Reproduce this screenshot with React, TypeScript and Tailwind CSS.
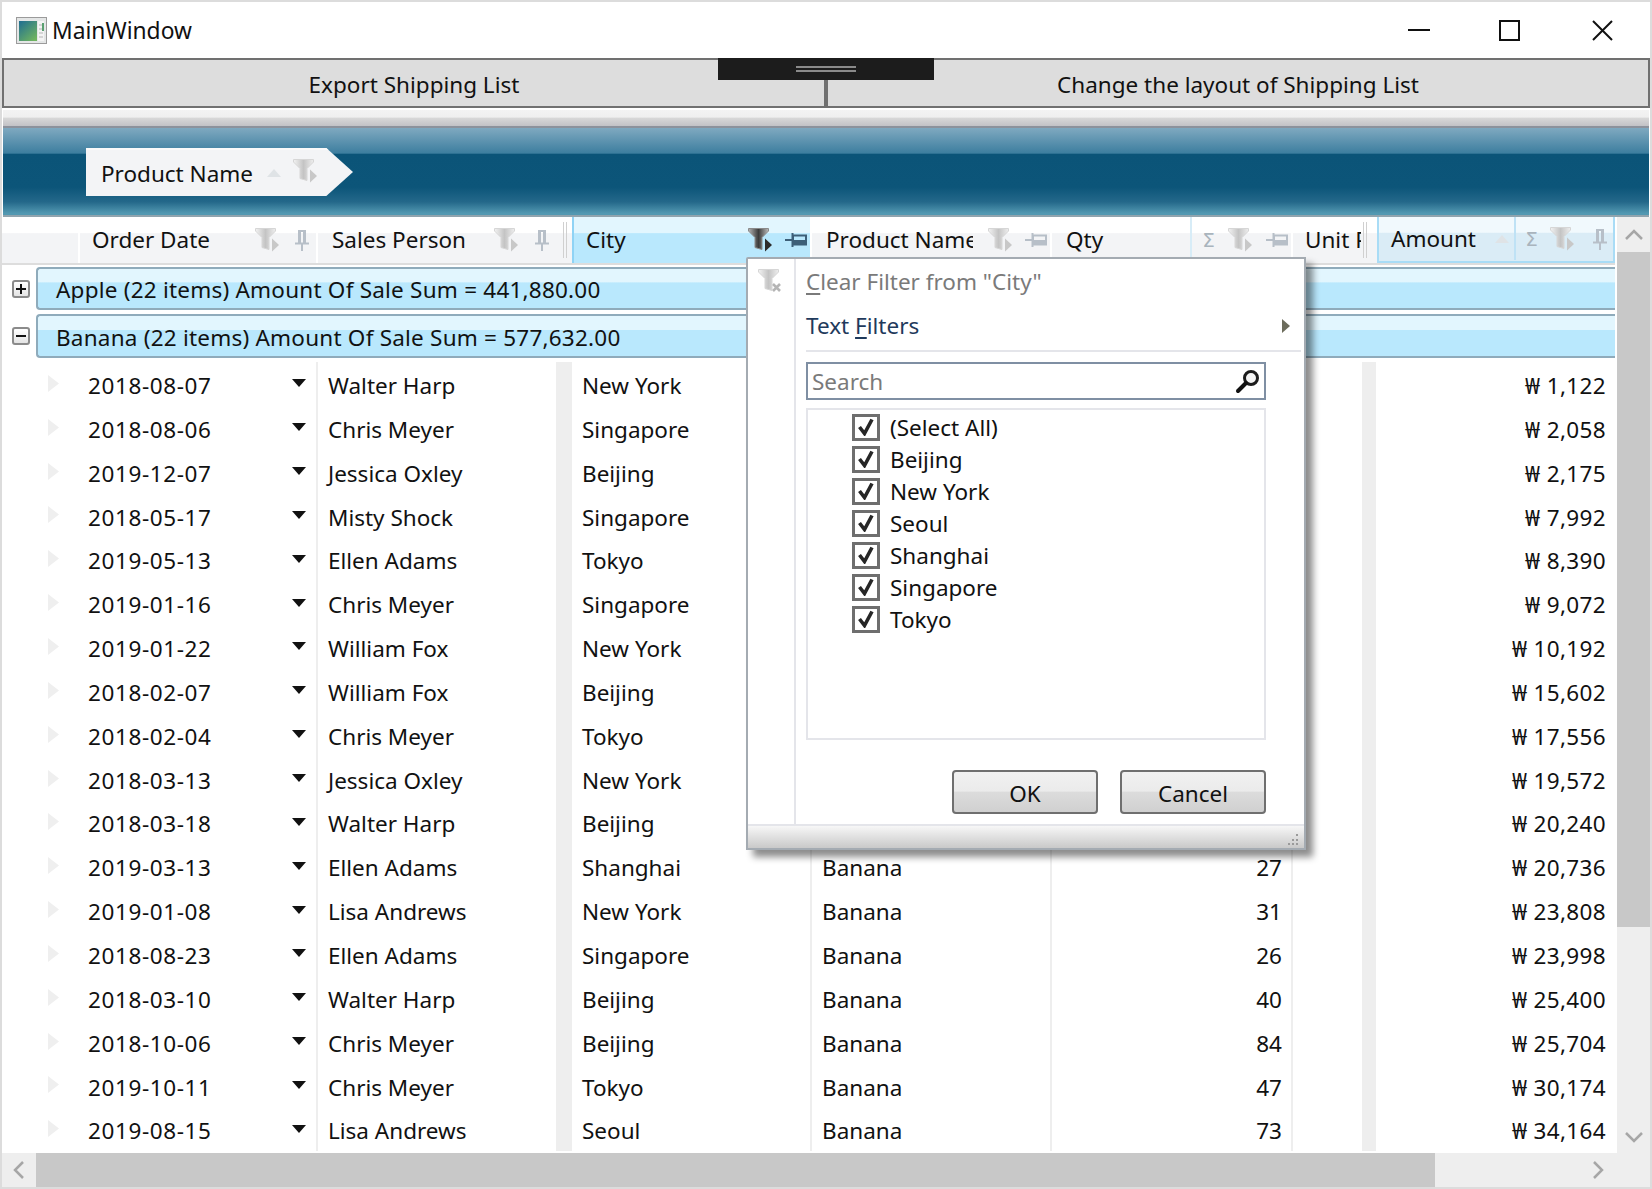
import React from "react";

const rows: [string, string, string, string, string][] = [
  ["2018-08-07", "Walter Harp", "New York", "", "1,122"],
  ["2018-08-06", "Chris Meyer", "Singapore", "", "2,058"],
  ["2019-12-07", "Jessica Oxley", "Beijing", "", "2,175"],
  ["2018-05-17", "Misty Shock", "Singapore", "", "7,992"],
  ["2019-05-13", "Ellen Adams", "Tokyo", "", "8,390"],
  ["2019-01-16", "Chris Meyer", "Singapore", "", "9,072"],
  ["2019-01-22", "William Fox", "New York", "", "10,192"],
  ["2018-02-07", "William Fox", "Beijing", "", "15,602"],
  ["2018-02-04", "Chris Meyer", "Tokyo", "", "17,556"],
  ["2018-03-13", "Jessica Oxley", "New York", "", "19,572"],
  ["2018-03-18", "Walter Harp", "Beijing", "", "20,240"],
  ["2019-03-13", "Ellen Adams", "Shanghai", "27", "20,736"],
  ["2019-01-08", "Lisa Andrews", "New York", "31", "23,808"],
  ["2018-08-23", "Ellen Adams", "Singapore", "26", "23,998"],
  ["2018-03-10", "Walter Harp", "Beijing", "40", "25,400"],
  ["2018-10-06", "Chris Meyer", "Beijing", "84", "25,704"],
  ["2019-10-11", "Chris Meyer", "Tokyo", "47", "30,174"],
  ["2019-08-15", "Lisa Andrews", "Seoul", "73", "34,164"],
];

const cities = ["(Select All)", "Beijing", "New York", "Seoul", "Shanghai", "Singapore", "Tokyo"];

function Funnel({ active = false, x = false }: { active?: boolean; x?: boolean }) {
  const id = active ? "fa" : x ? "fx" : "fn";
  return (
    <svg width="25" height="24" viewBox="0 0 25 24" className="shrink-0">
      <defs>
        <linearGradient id={id} x1="0" y1="0" x2="1" y2="0">
          <stop offset="0" stopColor={active ? "#b5b5b5" : "#f2f2f2"} />
          <stop offset="0.5" stopColor={active ? "#3c3c3c" : "#c4c4c4"} />
          <stop offset="1" stopColor={active ? "#bcbcbc" : "#eeeeee"} />
        </linearGradient>
      </defs>
      <path d="M0.500 0.500h20v2.500l-6.500 6.500v12l-7-2v-10L0.500 3z" fill={`url(#${id})`} stroke={active ? "#8a8a8a" : "#d6d6d6"} strokeWidth="1" />
      {x ? (
        <path d="M15 15l7 7M22 15l-7 7" stroke="#b5b5b5" strokeWidth="2.600" fill="none" />
      ) : (
        <path d="M17 10.500l7 6.500-7 6.500z" fill={active ? "#2b2b2b" : "#c8c8c8"} />
      )}
    </svg>
  );
}

function PinV({ color = "#b7bfc8" }: { color?: string }) {
  return (
    <svg width="14" height="22" viewBox="0 0 14 22" className="shrink-0">
      <path d="M0 14.500h14M7 15v7" stroke={color} strokeWidth="2" fill="none" />
      <path d="M3 1h8v13H8V3H6v11H3z" fill={color} />
      <path d="M8 2h3v12H8z" fill={color} />
    </svg>
  );
}

function PinH({ color = "#b7bfc8" }: { color?: string }) {
  return (
    <svg width="22" height="14" viewBox="0 0 22 14" className="shrink-0">
      <path d="M7.500 0v14M0 7h7" stroke={color} strokeWidth="2" fill="none" />
      <path d="M8 2.500h13v9H8z" fill="none" stroke={color} strokeWidth="2" />
      <path d="M8 7h13v5H8z" fill={color} />
    </svg>
  );
}

function Sigma() {
  return <span className="text-[20px] leading-none text-[#a9b4bd] shrink-0 font-['DejaVu_Sans',sans-serif]">Σ</span>;
}

function SortUp() {
  return (
    <svg width="14" height="8" viewBox="0 0 14 8" className="shrink-0">
      <path d="M7 0l7 8H0z" fill="#dfe3e6" />
    </svg>
  );
}

function Check() {
  return (
    <span className="w-[28px] h-[27px] border-[3px] border-[#6e6e6e] flex items-center justify-center shrink-0 bg-white">
      <svg width="18" height="18" viewBox="0 0 18 18">
        <path d="M2.500 9l5 6.500L15 1.500" stroke="#262626" strokeWidth="3.600" fill="none" />
      </svg>
    </span>
  );
}

function Chevron({ dir }: { dir: "up" | "down" | "left" | "right" }) {
  const d = { up: "M2 11l8-8 8 8", down: "M2 3l8 8 8-8", left: "M11 2l-8 8 8 8", right: "M3 2l8 8-8 8" }[dir];
  const vert = dir === "up" || dir === "down";
  return (
    <svg width={vert ? 20 : 14} height={vert ? 14 : 20} viewBox={vert ? "0 0 20 14" : "0 0 14 20"}>
      <path d={d} stroke="#a6a6a6" strokeWidth="2.500" fill="none" />
    </svg>
  );
}

function GroupRow({ sign, text, className, textClass }: { sign: string; text: string; className: string; textClass: string }) {
  return (
    <div className={`flex items-center ${className}`}>
      <div className="w-[34px] pl-[10px] shrink-0">
        <div className="w-[18px] h-[18px] rounded-[3px] border-2 border-[#8b8b8b] bg-[linear-gradient(#ffffff,#e4e4e4)] flex items-center justify-center">
          <svg width="10" height="10" viewBox="0 0 10 10">
            <path d={sign === "+" ? "M0 5h10M5 0v10" : "M0 5h10"} stroke="#111" strokeWidth="2" />
          </svg>
        </div>
      </div>
      <div className={`flex-1 h-full flex items-center pl-[18px] rounded-l-[4px] border-2 border-r-0 border-[#8fabbb] bg-[linear-gradient(#e2f6fe_0%,#e2f6fe_34%,#b9e8fd_35%,#b9e8fd_100%)] text-[#111] whitespace-nowrap tracking-[0.22px] ${textClass}`}>
        {text}
      </div>
    </div>
  );
}

export default function App() {
  return (
    <div className="w-[1652px] h-[1189px] box-border border-2 border-[#dcdcdc] bg-white flex flex-col relative overflow-hidden font-['Noto_Sans','Open_Sans',sans-serif] text-[22.5px] text-[#111]">
      {/* Title bar */}
      <div className="h-[56px] shrink-0 flex items-center pl-[14px]">
        <svg width="31" height="27" viewBox="0 0 31 27" className="shrink-0">
          <defs>
            <linearGradient id="wi" x1="0" y1="0" x2="0.8" y2="1">
              <stop offset="0" stopColor="#1f6d92" />
              <stop offset="1" stopColor="#6fb45f" />
            </linearGradient>
          </defs>
          <rect x="0.500" y="0.500" width="30" height="26" fill="#e4e6e6" stroke="#9b9b9b" />
          <rect x="3" y="4" width="18" height="20" fill="url(#wi)" />
          <rect x="22" y="4" width="6" height="20" fill="#f4f4f4" />
          <rect x="26" y="6" width="2" height="8" fill="#5aa070" />
          <path d="M23 8h3M23 12h3M23 16h4M23 20h4" stroke="#b5b5b5" />
        </svg>
        <span className="ml-[5px] pt-[2px] text-[22.8px]">MainWindow</span>
        <div className="ml-auto flex items-center">
          <svg width="22" height="4" viewBox="0 0 22 4">
            <path d="M0 2h22" stroke="#111" strokeWidth="2" />
          </svg>
          <svg width="21" height="21" viewBox="0 0 21 21" className="ml-[69px]">
            <rect x="1" y="1" width="19" height="19" fill="none" stroke="#111" strokeWidth="2" />
          </svg>
          <svg width="21" height="21" viewBox="0 0 21 21" className="ml-[72px] mr-[37px]">
            <path d="M1 1l19 19M20 1L1 20" stroke="#111" strokeWidth="2" fill="none" />
          </svg>
        </div>
      </div>

      {/* Toolbar */}
      <div className="h-[50px] shrink-0 border-2 border-[#707070] bg-[#dddddd] flex items-center">
        <div className="w-[820px] h-full flex items-center justify-center pt-[4px]">Export Shipping List</div>
        <div className="w-[4px] h-full bg-[#707070]" />
        <div className="flex-1 h-full flex items-center justify-center pt-[4px]">Change the layout of Shipping List</div>
      </div>

      {/* Splitter */}
      <div className="h-[18px] shrink-0 mt-[2px] mx-px border-b-2 border-[#8c929c] bg-[linear-gradient(#f3f3f3_0%,#efefef_45%,#d8d8d8_50%,#c2c2c6_100%)]" />

      {/* Group panel */}
      <div className="h-[89px] shrink-0 mx-px bg-[linear-gradient(#7fa9c0_0%,#3d7e9f_29%,#0b5478_30%,#0c5579_68%,#24688a_85%,#5298b1_98%)] border-b-2 border-[#90a4ae] pt-[20px] pl-[83px]">
        <div className="w-[267px] h-[48px] flex items-center pl-[15px] pt-[2px] bg-[#f3f4f6] border-t-2 border-[#fafafa] [clip-path:polygon(0_0,90%_0,100%_50%,90%_100%,0_100%)]">
          <span>Product Name</span>
          <span className="ml-[14px] -mt-[2px]"><SortUp /></span>
          <span className="ml-[12px] -mt-[6px]"><Funnel /></span>
        </div>
      </div>

      {/* Grid with scrollbars */}
      <div className="flex-1 flex flex-col min-h-0">
        <div className="flex-1 flex min-h-0">
          <div className="w-[1613px] flex flex-col min-h-0">
            {/* Header */}
            <div className="h-[48px] shrink-0 flex border-b-2 border-[#dddddd] bg-white">
              <div className="w-[76px] mr-[2px] bg-[linear-gradient(#ffffff_35%,#f3f4f6_36%)]" />
              <div className="w-[236px] mr-[2px] flex items-center pl-[12px] pb-[1px] bg-[linear-gradient(#ffffff_35%,#f3f4f6_36%)]">
                <span>Order Date</span>
                <span className="ml-auto flex items-center gap-[15px] mr-[7px]"><Funnel /><PinV /></span>
              </div>
              <div className="w-[240px] flex items-center pl-[14px] pb-[1px] bg-[linear-gradient(#ffffff_35%,#f3f4f6_36%)]">
                <span>Sales Person</span>
                <span className="ml-auto flex items-center gap-[16px] mr-[9px]"><Funnel /><PinV /></span>
              </div>
              <div className="w-[14px] flex items-center justify-center gap-[2px] bg-[linear-gradient(#ffffff_35%,#f3f4f6_36%)]">
                <span className="w-[1px] h-[36px] bg-[#d0d0d0]" />
                <span className="w-[1px] h-[36px] bg-[#d0d0d0]" />
              </div>
              <div className="w-[238px] mr-[2px] flex items-center pl-[12px] pb-[1px] border-l-2 border-[#8fd3f5] bg-[linear-gradient(#e2f6fe_35%,#b9e8fd_36%)]">
                <span>City</span>
                <span className="ml-auto flex items-center gap-[12px] mr-[3px]"><Funnel active /><PinH color="#3d5f78" /></span>
              </div>
              <div className="w-[238px] mr-[2px] flex items-center pl-[14px] pb-[1px] bg-[linear-gradient(#ffffff_35%,#f3f4f6_36%)]">
                <span className="w-[147px] overflow-hidden whitespace-nowrap">Product Name</span>
                <span className="ml-auto flex items-center gap-[12px] mr-[3px]"><Funnel /><PinH /></span>
              </div>
              <div className="w-[239px] mr-[2px] flex items-center pl-[14px] pb-[1px] bg-[linear-gradient(#ffffff_35%,#f3f4f6_36%)]">
                <span>Qty</span>
                <span className="ml-auto h-full flex items-center gap-[13px] pl-[10px] pr-[3px] border-l-2 border-[#d7ecf7]"><Sigma /><Funnel /><PinH /></span>
              </div>
              <div className="w-[84px] flex items-center pl-[12px] pb-[1px] bg-[linear-gradient(#ffffff_35%,#f3f4f6_36%)]">
                <span className="w-[56px] overflow-hidden whitespace-nowrap">Unit Price</span>
                <span className="w-[1px] h-[36px] bg-[#d0d0d0] ml-[2px]" />
                <span className="w-[1px] h-[36px] bg-[#d0d0d0] ml-[2px]" />
              </div>
              <div className="flex-1 flex items-center pl-[12px] pb-[1px] border-2 border-t-0 border-[#a9dcf6] bg-[linear-gradient(#f1f9fd_35%,#daecf6_36%)]">
                <span>Amount</span>
                <span className="ml-[19px]"><SortUp /></span>
                <span className="ml-auto h-full flex items-center pl-[9px] pr-[6px] border-l-2 border-[#bfe2f5]">
                  <Sigma />
                  <span className="ml-[12px] mr-[18px]"><Funnel /></span>
                  <PinV />
                </span>
              </div>
            </div>

            {/* Body */}
            <div className="flex-1 min-h-0 overflow-hidden">
              <GroupRow sign="+" text="Apple (22 items) Amount Of Sale Sum = 441,880.00" className="h-[43px] mt-[2px]" textClass="pt-[3px]" />
              <GroupRow sign="-" text="Banana (22 items) Amount Of Sale Sum = 577,632.00" className="h-[44px] mt-[4px]" textClass="pt-[4px]" />
              <div className="mt-[4px]">
                {rows.map((r) => (
                  <div key={r[0] + r[4]} className="h-[43.85px] flex">
                    <div className="w-[316px] border-r-2 border-[#eeeeee] flex items-center pl-[46px] pt-[4px]">
                      <svg width="11" height="17" viewBox="0 0 11 17" className="shrink-0 -mt-[5px]">
                        <path d="M0 0l11 8.500L0 17z" fill="#efefef" />
                      </svg>
                      <span className="ml-[29px] tracking-[0.6px]">{r[0]}</span>
                      <svg width="14" height="8" viewBox="0 0 14 8" className="ml-auto mr-[10px] -mt-[5px]">
                        <path d="M0 0h14L7 8z" fill="#111" />
                      </svg>
                    </div>
                    <div className="w-[238px] flex items-center pl-[10px] pt-[4px]">{r[1]}</div>
                    <div className="w-[16px] bg-[#eeeeee]" />
                    <div className="w-[240px] border-r-2 border-[#eeeeee] flex items-center pl-[10px] pt-[4px]">{r[2]}</div>
                    <div className="w-[240px] border-r-2 border-[#eeeeee] flex items-center pl-[10px] pt-[4px]">{r[3] ? "Banana" : ""}</div>
                    <div className="w-[241px] border-r-2 border-[#eeeeee] flex items-center justify-end pr-[9px] pt-[4px]">{r[3]}</div>
                    <div className="w-[69px]" />
                    <div className="w-[14px] bg-[#eeeeee]" />
                    <div className="flex-1 flex items-center justify-end pr-[9px] pt-[4px] tracking-[0.35px]">₩ {r[4]}</div>
                  </div>
                ))}
              </div>
            </div>
          </div>

          {/* Vertical scrollbar */}
          <div className="flex-1 flex flex-col ml-[2px] bg-[#eeeeee]">
            <div className="h-[35px] shrink-0 flex items-center justify-center"><Chevron dir="up" /></div>
            <div className="h-[675px] shrink-0 bg-[#c8c8c8]" />
            <div className="mt-auto h-[33px] shrink-0 flex items-center justify-center"><Chevron dir="down" /></div>
          </div>
        </div>

        {/* Horizontal scrollbar */}
        <div className="h-[34px] shrink-0 flex bg-[#eeeeee]">
          <div className="w-[34px] flex items-center justify-center"><Chevron dir="left" /></div>
          <div className="w-[1399px] bg-[#c8c8c8]" />
          <div className="flex-1 flex items-center justify-end pr-[45px]"><Chevron dir="right" /></div>
        </div>
      </div>

      {/* Drag handle over the toolbar */}
      <div className="absolute left-[716px] top-[56px] w-[216px] h-[22px] bg-[#1c1c1c] flex flex-col items-center justify-center gap-[2px]">
        <span className="w-[60px] h-[2px] bg-[#8a8a8a]" />
        <span className="w-[60px] h-[2px] bg-[#8a8a8a]" />
      </div>

      {/* Filter popup */}
      <div className="absolute left-[744px] top-[255px] w-[560px] h-[593px] bg-white border-2 border-[#a4abb2] shadow-[7px_7px_7px_rgba(0,0,0,0.45)] rounded-tl-[2px] flex flex-col">
        <div className="flex-1 flex min-h-0">
          <div className="w-[48px] shrink-0 border-r-2 border-[#e4e5ea] pt-[10px] pl-[10px]">
            <Funnel x />
          </div>
          <div className="flex-1 pl-[10px] pr-[3px] flex flex-col">
            <div className="h-[44px] flex items-center text-[#7a7a7a] pt-[2px]">
              <span><span className="underline underline-offset-[3px]">C</span>lear Filter from "City"</span>
            </div>
            <div className="h-[44px] flex items-center justify-between pr-[11px] text-[#1f3a5c] pt-[2px]">
              <span>Text <span className="underline underline-offset-[3px]">F</span>ilters</span>
              <svg width="8" height="14" viewBox="0 0 8 14"><path d="M0 0l8 7-8 7z" fill="#6c6c5c" /></svg>
            </div>
            <div className="h-[2px] bg-[#e4e5ea] mt-[3px]" />
            <div className="mr-[35px] mt-[10px] h-[38px] shrink-0 border-2 border-[#7f8fa3] flex items-center pl-[4px] pr-[3px] justify-between">
              <span className="text-[#7a7a7a] pt-[2px]">Search</span>
              <svg width="26" height="26" viewBox="0 0 26 26">
                <circle cx="16" cy="10" r="6.500" fill="#f4f4f4" stroke="#1c1c1c" strokeWidth="3" />
                <path d="M11 15L3 23" stroke="#111" strokeWidth="4" strokeLinecap="round" />
              </svg>
            </div>
            <div className="mr-[35px] mt-[8px] h-[332px] shrink-0 border-2 border-[#e4e5ea] pt-[1px] pl-[44px] flex flex-col">
              {cities.map((c) => (
                <div key={c} className="h-[32px] shrink-0 flex items-center gap-[10px]">
                  <Check />
                  <span className="pt-[2px]">{c}</span>
                </div>
              ))}
            </div>
            <div className="mr-[35px] mt-[30px] flex justify-end gap-[22px]">
              <button className="w-[146px] h-[44px] rounded-[4px] border-2 border-[#6f6f6f] bg-[linear-gradient(#f1f1f1_0%,#ebebeb_48%,#dcdcdc_50%,#d0d0d0_100%)] pt-[4px]">OK</button>
              <button className="w-[146px] h-[44px] rounded-[4px] border-2 border-[#6f6f6f] bg-[linear-gradient(#f1f1f1_0%,#ebebeb_48%,#dcdcdc_50%,#d0d0d0_100%)] pt-[4px]">Cancel</button>
            </div>
          </div>
        </div>
        <div className="h-[24px] shrink-0 border-t-2 border-[#e4e5ea] bg-[linear-gradient(#f7f7f7,#c9c9c9)] flex justify-end items-end pr-[5px] pb-[3px]">
          <svg width="12" height="12" viewBox="0 0 12 12">
            <path d="M9 1h2v2H9zM5 6h2v2H5zM9 6h2v2H9zM1 10h2v2H1zM5 10h2v2H5zM9 10h2v2H9z" fill="#9a9a9a" />
          </svg>
        </div>
      </div>
    </div>
  );
}
